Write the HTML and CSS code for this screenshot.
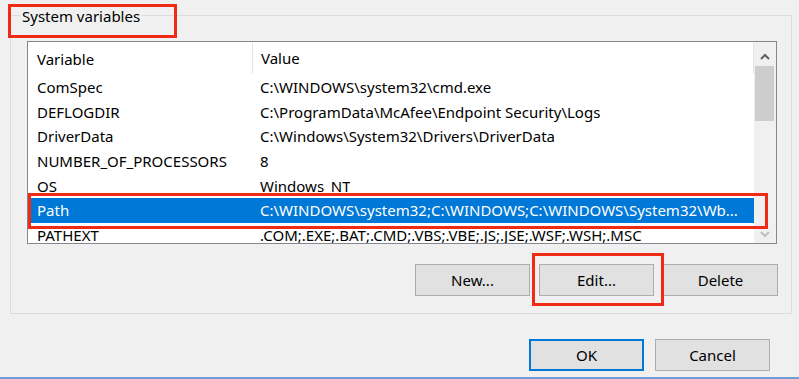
FILE: index.html
```html
<!DOCTYPE html>
<html lang="en">
<head>
    <meta charset="UTF-8">
    <meta name="viewport" content="width=device-width, initial-scale=1.0">
    <title>Environment Variables</title>
    <link rel="stylesheet" href="styles.css">
</head>
<body>

    <div class="dialog">
        <div class="group">
            <div class="group-title">System variables</div>

            <div class="listbox">
                <div class="list-main">
                    <div class="list-head">
                        <span class="col-var">Variable</span>
                        <span class="col-val">Value</span>
                    </div>
                    <div class="row"><span class="col-var">ComSpec</span><span class="col-val">C:\WINDOWS\system32\cmd.exe</span></div>
                    <div class="row"><span class="col-var">DEFLOGDIR</span><span class="col-val">C:\ProgramData\McAfee\Endpoint Security\Logs</span></div>
                    <div class="row"><span class="col-var">DriverData</span><span class="col-val">C:\Windows\System32\Drivers\DriverData</span></div>
                    <div class="row"><span class="col-var">NUMBER_OF_PROCESSORS</span><span class="col-val">8</span></div>
                    <div class="row"><span class="col-var">OS</span><span class="col-val">Windows_NT</span></div>
                    <div class="row selected"><span class="col-var">Path</span><span class="col-val">C:\WINDOWS\system32;C:\WINDOWS;C:\WINDOWS\System32\Wb...</span></div>
                    <div class="row"><span class="col-var">PATHEXT</span><span class="col-val">.COM;.EXE;.BAT;.CMD;.VBS;.VBE;.JS;.JSE;.WSF;.WSH;.MSC</span></div>
                </div>
                <div class="scrollbar">
                    <svg class="arrow" width="22" height="18" viewBox="0 0 22 18">
                        <polyline points="7,11 11,7 15,11" fill="none" stroke="#606060" stroke-width="2"/>
                    </svg>
                    <div class="thumb"></div>
                    <div class="track"></div>
                    <svg class="arrow" width="22" height="18" viewBox="0 0 22 18">
                        <polyline points="7,7 11,11 15,7" fill="none" stroke="#bfbfbf" stroke-width="2"/>
                    </svg>
                </div>
            </div>

            <div class="group-buttons">
                <button>New...</button>
                <button>Edit...</button>
                <button>Delete</button>
            </div>
        </div>

        <div class="dialog-buttons">
            <button class="default">OK</button>
            <button>Cancel</button>
        </div>

        <!-- red callouts from the tutorial -->
        <div class="callout callout-title"></div>
        <div class="callout callout-path"></div>
        <div class="callout callout-edit"></div>
    </div>

</body>
</html>
```

FILE: styles.css
```css
/* General Styling */
body {
    margin: 0;
    background: #f0f0f0;
    font-family: 'Noto Sans', sans-serif;
    font-size: 15px;
    color: #000;
}

.dialog {
    position: relative;
    height: 379px;
    box-sizing: border-box;
    padding-top: 15px;
    border-bottom: 2px solid #6f9bd6;
}

/* Group box */
.group {
    margin-left: 10px;
    width: 780px;
    height: 297px;
    border: 1px solid #dcdcdc;
}

.group-title {
    width: fit-content;
    margin: -10px 0 0 9px;
    padding: 0 2px;
    line-height: 20px;
    background: #f0f0f0;
}

/* List view */
.listbox {
    display: flex;
    margin: 15px 0 0 16px;
    width: 750px;
    height: 203px;
    box-sizing: border-box;
    border: 1px solid #828790;
    background: #fff;
}

.list-main {
    flex: 1;
    overflow: hidden;
}

.list-head, .row {
    display: flex;
    white-space: nowrap;
}

.list-head {
    height: 33px;
    align-items: center;
}

.list-head .col-val {
    flex: 1;
    height: 31px;
    line-height: 31px;
    border-left: 1px solid #e5e5e5;
    border-right: 1px solid #e5e5e5;
    box-sizing: border-box;
}

.col-var {
    width: 215px;
    padding-left: 9px;
    flex-shrink: 0;
}

.col-val {
    padding-left: 8px;
    overflow: hidden;
}

.row {
    height: 24.67px;
    line-height: 24.67px;
}

.row.selected {
    background: #0078d7;
    color: #fff;
}

/* Scrollbar */
.scrollbar {
    width: 22px;
    display: flex;
    flex-direction: column;
    background: #f0f0f0;
}

.arrow {
    flex-shrink: 0;
    margin-top: 6px;
}

.thumb {
    height: 55px;
    margin: 0 2px 0 1px;
    background: #cdcdcd;
}

.track {
    flex: 1;
}

/* Buttons */
button {
    font: inherit;
    color: #000;
    width: 115px;
    height: 32px;
    padding: 0;
    background: #e1e1e1;
    border: 1px solid #adadad;
}

.group-buttons {
    display: flex;
    justify-content: flex-end;
    gap: 9px;
    margin: 20px 13px 0 0;
}

.dialog-buttons {
    display: flex;
    justify-content: flex-end;
    gap: 11px;
    margin: 25px 29px 0 0;
}

button.default {
    border: 2px solid #0078d7;
}

/* Red callouts */
.callout {
    position: absolute;
    border: 3px solid #ef2b16;
}

.callout-title {
    left: 8px;
    top: 4px;
    width: 163px;
    height: 28px;
}

.callout-path {
    left: 28px;
    top: 193px;
    width: 734px;
    height: 30px;
}

.callout-edit {
    left: 532px;
    top: 253px;
    width: 126px;
    height: 47px;
}
```
